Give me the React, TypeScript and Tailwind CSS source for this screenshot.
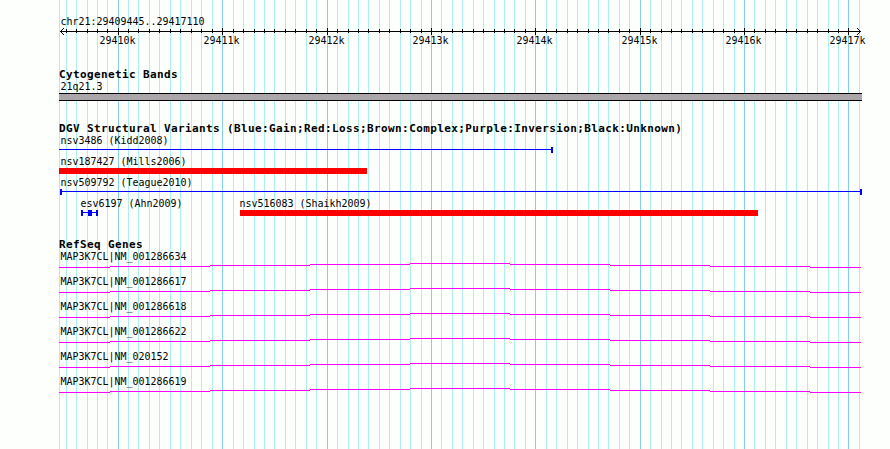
import React from 'react';

const LEFT = 59;

const majorTicks = [
  { x: 118, label: '29410k' },
  { x: 222, label: '29411k' },
  { x: 327, label: '29412k' },
  { x: 431, label: '29413k' },
  { x: 535, label: '29414k' },
  { x: 640, label: '29415k' },
  { x: 744, label: '29416k' },
  { x: 848, label: '29417k' },
];

const minorTicks = [
  66, 76, 87, 97, 107, 128, 138, 149, 159, 170, 180, 191, 201, 212, 233, 243, 254, 264,
  274, 285, 295, 306, 316, 337, 348, 358, 368, 379, 389, 400, 410, 421, 441, 452, 462,
  473, 483, 494, 504, 514, 525, 546, 556, 567, 577, 588, 598, 608, 619, 629, 650, 661,
  671, 681, 692, 702, 713, 723, 734, 754, 765, 775, 786, 796, 807, 817, 828, 838, 859,
];

type Variant = {
  name: string;
  x: number;
  bar?: [number, number];
  line?: [number, number];
  caps?: number[];
  block?: [number, number];
};

const variantRows: Variant[][] = [
  [{ name: 'nsv3486 (Kidd2008)', x: 60, line: [59, 552], caps: [551] }],
  [{ name: 'nsv187427 (Mills2006)', x: 60, bar: [59, 367] }],
  [{ name: 'nsv509792 (Teague2010)', x: 60, line: [61, 861], caps: [60, 860] }],
  [
    { name: 'esv6197 (Ahn2009)', x: 80, line: [82, 97], caps: [81, 96], block: [88, 92] },
    { name: 'nsv516083 (Shaikh2009)', x: 239, bar: [240, 758] },
  ],
];

const genes = [
  'NM_001286634',
  'NM_001286617',
  'NM_001286618',
  'NM_001286622',
  'NM_020152',
  'NM_001286619',
];

// intron arc, one pixel step every 100px
const intron = [
  [59, 110, 4],
  [110, 210, 3],
  [210, 310, 2],
  [310, 410, 1],
  [410, 510, 0],
  [510, 610, 1],
  [610, 710, 2],
  [710, 810, 3],
  [810, 861, 4],
];

function Label({ x, y, children }: { x: number; y: number; children: string }) {
  return (
    <text
      x={x + 0.5}
      y={y}
      textLength={children.length * 6}
      lengthAdjust="spacingAndGlyphs"
      className="text-[11px] fill-black whitespace-pre"
    >
      {children}
    </text>
  );
}

function Heading({ children }: { children: string }) {
  return (
    <h2 className="h-3 pl-[59px] text-[11px] leading-[13px] font-bold tracking-[0.38px] whitespace-nowrap">
      {children}
    </h2>
  );
}

function Grid() {
  return (
    <svg className="absolute inset-0" width="890" height="449" shapeRendering="crispEdges">
      {[LEFT, ...minorTicks].map((x) => (
        <rect key={x} x={x} y={0} width={1} height={449} fill="#afeeee" />
      ))}
      {majorTicks.map(({ x }) => (
        <rect key={x} x={x} y={0} width={1} height={449} fill="#87ceeb" />
      ))}
    </svg>
  );
}

function Ruler() {
  return (
    <svg className="block" width="890" height="33">
      <Label x={60} y={10}>chr21:29409445..29417110</Label>
      <g shapeRendering="crispEdges">
        <rect x={60} y={16} width={801} height={1} />
        {minorTicks.slice(0, -1).map((x) => (
          <rect key={x} x={x} y={14} width={1} height={4} />
        ))}
        {majorTicks.map(({ x }) => (
          <rect key={x} x={x} y={13} width={1} height={7} />
        ))}
        {[1, 2, 3].map((d) => (
          <g key={d}>
            <rect x={60 + d} y={16 - d} width={1} height={1} />
            <rect x={60 + d} y={16 + d} width={1} height={1} />
            <rect x={860 - d} y={16 - d} width={1} height={1} />
            <rect x={860 - d} y={16 + d} width={1} height={1} />
          </g>
        ))}
      </g>
      {majorTicks.map(({ x, label }) => (
        <Label key={x} x={x - 19} y={29}>{label}</Label>
      ))}
    </svg>
  );
}

function VariantRow({ items }: { items: Variant[] }) {
  return (
    <svg className="block" width="890" height="21">
      {items.map((v) => (
        <g key={v.name}>
          <Label x={v.x} y={10}>{v.name}</Label>
          <g shapeRendering="crispEdges" fill="#0000ff">
            {v.bar && <rect x={v.bar[0]} y={13} width={v.bar[1] - v.bar[0]} height={6} fill="#ff0000" />}
            {v.line && <rect x={v.line[0]} y={15} width={v.line[1] - v.line[0]} height={1} />}
            {v.caps?.map((x) => <rect key={x} x={x} y={13} width={2} height={6} />)}
            {v.block && <rect x={v.block[0]} y={13} width={v.block[1] - v.block[0]} height={6} />}
          </g>
        </g>
      ))}
    </svg>
  );
}

function GeneRow({ id }: { id: string }) {
  return (
    <svg className="block" width="890" height="25">
      <Label x={60} y={10}>{`MAP3K7CL|${id}`}</Label>
      <g shapeRendering="crispEdges" fill="#ff00ff">
        {intron.map(([from, to, dy]) => (
          <rect key={from} x={from} y={13 + dy} width={to - from} height={1} />
        ))}
      </g>
    </svg>
  );
}

export default function App() {
  return (
    <div className="relative w-[890px] h-[449px] overflow-hidden bg-[#fdfffc] text-black font-['DejaVu_Sans_Mono',monospace]">
      <Grid />
      <main className="relative flex flex-col pt-[15px]">
        <Ruler />

        <section className="mt-5">
          <Heading>Cytogenetic Bands</Heading>
          <svg className="block" width="890" height="13">
            <Label x={60} y={10}>21q21.3</Label>
          </svg>
          <div className="ml-[59px] w-[803px] h-2 border-y border-black bg-[#aaa6aa]" />
        </section>

        <section className="mt-[21px]">
          <Heading>DGV Structural Variants (Blue:Gain;Red:Loss;Brown:Complex;Purple:Inversion;Black:Unknown)</Heading>
          {variantRows.map((items) => (
            <VariantRow key={items[0].name} items={items} />
          ))}
        </section>

        <section className="mt-5">
          <Heading>RefSeq Genes</Heading>
          {genes.map((id) => (
            <GeneRow key={id} id={id} />
          ))}
        </section>
      </main>
    </div>
  );
}
